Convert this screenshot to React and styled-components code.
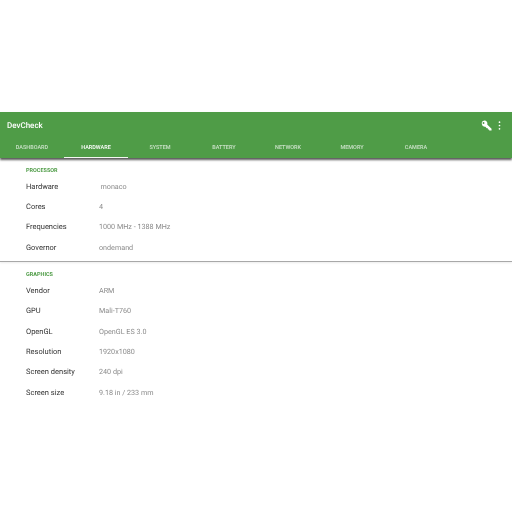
import React from "react";
import styled, { createGlobalStyle } from "styled-components";

const GlobalStyle = createGlobalStyle`
  html, body {
    margin: 0;
    background: #ffffff;
    font-family: Roboto, "Liberation Sans", sans-serif;
    text-rendering: geometricPrecision;
  }
`;

const Page = styled.div`
  width: 512px;
  height: 512px;
  padding-top: 112px;
  box-sizing: border-box;
  overflow: hidden;
  filter: blur(0.4px);
`;

const Header = styled.header`
  background: #4f9c47;
  height: 46px;
  box-shadow: 0 1.5px 2px rgba(0, 0, 0, 0.65);
  position: relative;
`;

const Toolbar = styled.div`
  height: 27px;
  display: flex;
  align-items: center;
  justify-content: space-between;
  padding: 0 11px 0 7px;
`;

const Title = styled.div`
  color: #ffffff;
  font-size: 8px;
  font-weight: 500;
`;

const Actions = styled.div`
  display: flex;
  align-items: center;
  gap: 6px;
`;

const Tabs = styled.nav`
  display: flex;
  height: 19px;
`;

const Tab = styled.div`
  width: 64px;
  height: 100%;
  box-sizing: border-box;
  display: flex;
  align-items: center;
  justify-content: center;
  font-size: 5.5px;
  font-weight: 500;
  color: ${(p) => (p.$active ? "#ffffff" : "rgba(255, 255, 255, 0.7)")};
  border-bottom: 1.5px solid ${(p) => (p.$active ? "#f4f8f3" : "transparent")};
`;

const Section = styled.section`
  padding: ${(p) => p.$pad};
  border-bottom: ${(p) => (p.$divided ? "1px solid #a8a8a8" : "none")};
  box-shadow: ${(p) => (p.$divided ? "0 1px 2px rgba(0, 0, 0, 0.08)" : "none")};
`;

const Heading = styled.h2`
  margin: 0 0 ${(p) => p.$gap} 26px;
  height: 8px;
  line-height: 8px;
  font-size: 5.5px;
  font-weight: 700;
  color: #4f9c47;
`;

const Row = styled.div`
  display: flex;
  align-items: center;
  height: ${(p) => p.$height};
  padding-left: 26px;
`;

const Label = styled.span`
  width: 73px;
  color: #333333;
  font-size: 7.5px;
`;

const Value = styled.span`
  color: #8a8a8a;
  font-size: 7.2px;
  padding-left: ${(p) => (p.$indent ? "1.5px" : "0")};
`;

const tabs = ["DASHBOARD", "HARDWARE", "SYSTEM", "BATTERY", "NETWORK", "MEMORY", "CAMERA"];

const processor = [
  ["Hardware", "monaco", true],
  ["Cores", "4"],
  ["Frequencies", "1000 MHz - 1388 MHz"],
  ["Governor", "ondemand"],
];

const graphics = [
  ["Vendor", "ARM"],
  ["GPU", "Mali-T760"],
  ["OpenGL", "OpenGL ES 3.0"],
  ["Resolution", "1920x1080"],
  ["Screen density", "240 dpi"],
  ["Screen size", "9.18 in / 233 mm"],
];

const Rows = ({ items, height }) =>
  items.map(([label, value, indent]) => (
    <Row key={label} $height={height}>
      <Label>{label}</Label>
      <Value $indent={indent}>{value}</Value>
    </Row>
  ));

const App = () => (
  <Page>
    <GlobalStyle />
    <Header>
      <Toolbar>
        <Title>DevCheck</Title>
        <Actions>
          <svg width="11" height="11" viewBox="0 0 24 24" fill="#ffffff">
            <path fillRule="evenodd" d="M7.500 1a6.500 6.500 0 0 1 6.100 8.700L23 19.100V23h-5l-.500-2.500H15V18h-2.500l-3-3.500A6.500 6.500 0 1 1 7.500 1zM5.500 4.500a2 2 0 1 0 0 4 2 2 0 0 0 0-4z" />
          </svg>
          <svg width="3" height="9" viewBox="0 0 3 9" fill="#ffffff">
            <circle cx="1.500" cy="1.200" r="0.850" />
            <circle cx="1.500" cy="4.500" r="0.850" />
            <circle cx="1.500" cy="7.800" r="0.850" />
          </svg>
        </Actions>
      </Toolbar>
      <Tabs>
        {tabs.map((t) => (
          <Tab key={t} $active={t === "HARDWARE"}>{t}</Tab>
        ))}
      </Tabs>
    </Header>
    <Section $pad="9px 0 4px" $divided>
      <Heading $gap="1px">PROCESSOR</Heading>
      <Rows items={processor} height="20.3px" />
    </Section>
    <Section $pad="9px 0 0">
      <Heading $gap="1px">GRAPHICS</Heading>
      <Rows items={graphics} height="20.4px" />
    </Section>
  </Page>
);

export default App;
